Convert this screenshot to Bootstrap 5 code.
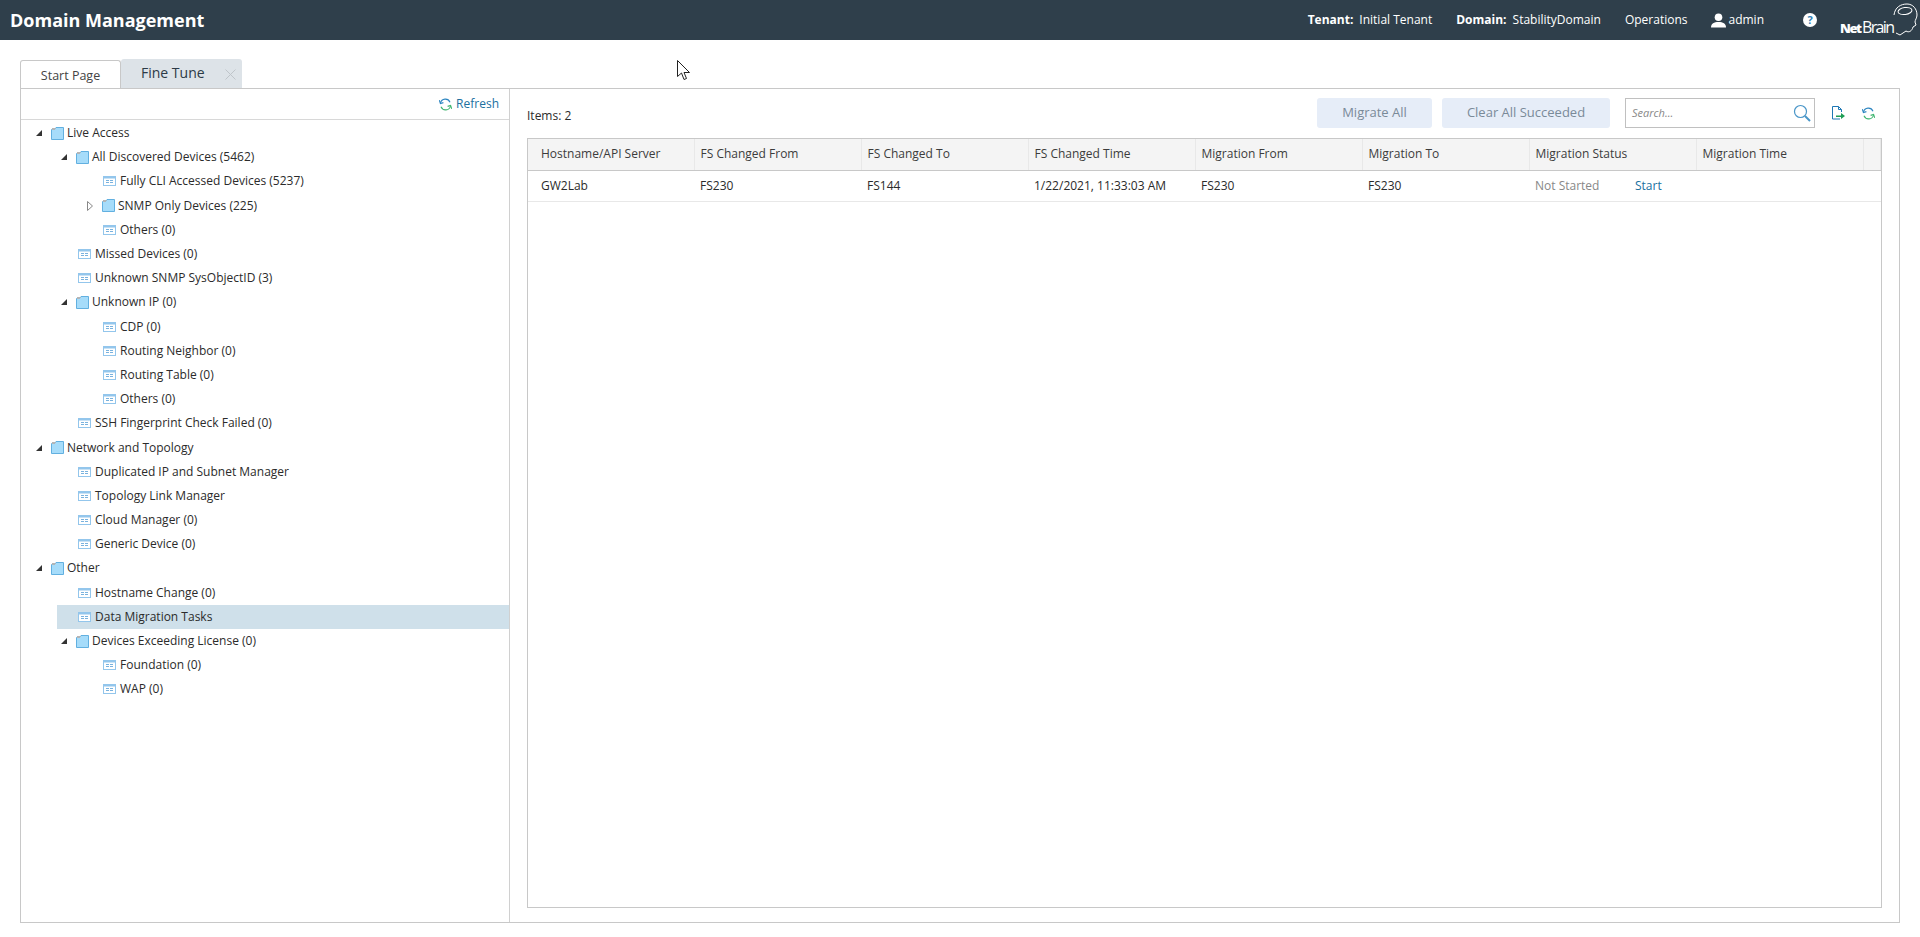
<!DOCTYPE html>
<html lang="en">
<head>
  <meta charset="UTF-8" />
  <title>Domain Management</title>
  <link href="https://cdn.jsdelivr.net/npm/bootstrap@5.3.0/dist/css/bootstrap.min.css" rel="stylesheet"/>
  <style>
    body { background: #fff; font-family: "Open Sans", "Liberation Sans", sans-serif; font-size: 12px; color: #2b2b2b; height: 937px; overflow: hidden; }
    .top-bar { height: 40px; background: #2f3f4b; color: #fff; padding: 0 2px 0 10px; }
    .top-bar h1 { font-size: 18px; font-weight: 700; margin: 0; line-height: 40px; }
    .top-item { font-size: 12px; }
    .top-item b { font-weight: 700; margin-right: 6px; }
    .page-wrap { padding: 19px 20px 0 20px; }
    .tab-row { height: 29px; align-items: flex-end; }
    .tab-start { width: 101px; height: 28px; border: 1px solid #c8c8c8; border-bottom: 0; border-radius: 3px 3px 0 0; text-align: center; line-height: 30px; color: #444; font-size: 12.5px; }
    .tab-fine { width: 121px; height: 29px; background: #dde3e8; border-radius: 3px 3px 0 0; padding-left: 20px; font-size: 14px; line-height: 28px; color: #2c3a46; }
    .tab-fine svg { margin-left: 20px; }
    .main-panel { height: 835px; border: 1px solid #c8c8c8; }
    .left-pane { width: 489px; border-right: 1px solid #d0d0d0; }
    .refresh-row { height: 31px; border-bottom: 1px solid #d8d8d8; padding-right: 10px; color: #20709f; gap: 4px; }
    .tree-list { padding-top: 1px; }
    .tree-row { height: 24.2px; white-space: nowrap; }
    .tree-row svg { flex: none; }
    .tree-row.on { background: #cfe0ea; margin-left: 36px; padding-left: 21px; }
    .tw { width: 6px; margin-right: 9px; }
    .lv0 { padding-left: 15px; }
    .lv1 { padding-left: 40px; }
    .lv2 { padding-left: 66px; }
    .leaf1 { padding-left: 57px; }
    .leaf2 { padding-left: 82px; }
    .ico-f { margin-right: 3px; }
    .ico-l { margin-right: 4px; }
    .right-pane { padding: 9px 17px 14px 17px; min-width: 0; }
    .tool-row { height: 30px; margin-bottom: 10px; }
    .btn-soft { height: 30px; background: #e6edf8; color: #7a8a99; border: 0; border-radius: 3px; font-size: 13px; padding: 0; }
    .search-box { width: 190px; height: 30px; border: 1px solid #c0c0c0; padding: 0 3px 0 6px; margin-left: 15px; font-style: italic; color: #888; font-size: 11px; }
    .data-wrap { height: 770px; border: 1px solid #c8c8c8; }
    .data-tbl { table-layout: fixed; width: 100%; margin: 0; font-size: 12px; --bs-table-color: #2b2b2b; }
    .data-tbl th { height: 31px; background: #f4f4f4; font-weight: 400; padding: 0 0 0 6px; vertical-align: middle; border-bottom: 1px solid #c8c8c8; border-right: 1px solid #e8e8e8; color: #3c3c3c; }
    .data-tbl td { height: 31px; padding: 0 0 0 6px; vertical-align: middle; border-bottom: 1px solid #e8e8e8; }
    .data-tbl th:first-child, .data-tbl td:first-child { padding-left: 13px; }
    .st-off { color: #888; width: 100px; display: inline-block; }
    .st-link { color: #20709f; text-decoration: none; }
    .mouse-ptr { position: absolute; left: 677px; top: 60px; }
  </style>
</head>
<body>
  <svg width="0" height="0" class="position-absolute">
    <symbol id="folder" viewBox="0 0 13 13">
      <path d="M.5 2.5V12.5H12.5V.5H5L3.5 2.5Z" fill="#a6dcfa" stroke="#62b0e0"/>
      <path d="M1 1H5L3.5 3H1Z" fill="#b5b5b5"/>
    </symbol>
    <symbol id="leaf" viewBox="0 0 13 10">
      <rect x=".5" y=".5" width="12" height="9" fill="#fff" stroke="#93c6ec"/>
      <rect x="1" y="1" width="11" height="1.5" fill="#93c6ec"/>
      <path d="M3 4.5H6M7 4.5H10M3 6.5H6M7 6.5H10" stroke="#79b2de"/>
    </symbol>
    <symbol id="sync" viewBox="0 0 13 13" fill="none">
      <path d="M1.5 5A5 5 0 0 1 11 4.2" stroke="#2e86c1" stroke-width="1.1"/>
      <path d="M11.5 8A5 5 0 0 1 2 8.8" stroke="#3fb56f" stroke-width="1.1"/>
      <path d="M.3 2.2L1.4 5.5L4.4 4.6" stroke="#2e86c1" stroke-width="1.1"/>
      <path d="M12.7 10.8L11.6 7.5L8.6 8.4" stroke="#3fb56f" stroke-width="1.1"/>
    </symbol>
    <symbol id="down" viewBox="0 0 6 6"><path d="M6 0V6H0Z" fill="#333"/></symbol>
  </svg>

  <div class="top-bar d-flex align-items-center">
    <h1>Domain Management</h1>
    <div class="top-item ms-auto"><b>Tenant:</b>Initial Tenant</div>
    <div class="top-item" style="margin-left:24px"><b>Domain:</b>StabilityDomain</div>
    <div class="top-item" style="margin-left:24px">Operations</div>
    <div class="top-item d-flex align-items-center" style="margin-left:24px">
      <svg width="15" height="15" viewBox="0 0 15 15" style="margin-right:2px"><circle cx="7.5" cy="4.2" r="3.8" fill="#fff"/><path d="M0 14.5C0 10.5 3 9 7.5 9S15 10.5 15 14.5Z" fill="#fff"/></svg>admin</div>
    <svg width="14" height="14" viewBox="0 0 14 14" style="margin-left:39px"><circle cx="7" cy="7" r="7" fill="#fff"/><text x="7" y="11" font-size="11" font-weight="700" text-anchor="middle" fill="#2f7fb5" font-family="Open Sans">?</text></svg>
    <svg width="80" height="36" viewBox="0 0 80 36" style="margin-left:21px" fill="none" stroke="#fff">
      <text x="2" y="31" font-size="13" font-weight="800" fill="#fff" stroke="none" font-family="Open Sans" textLength="22">Net</text>
      <text x="24" y="31" font-size="16" fill="#fff" stroke="none" font-family="Open Sans" textLength="33">Brain</text>
      <path d="M56 13C57 5 63 2 69 2S79 7 79 13C79 16 77 18 77 20L78 23L75 25C74 29 71 31 68 29L62 33L58 31" stroke-width="1"/>
      <ellipse cx="67" cy="9" rx="7" ry="3.5" stroke-width="1" transform="rotate(-8 67 9)"/>
    </svg>
  </div>

  <div class="page-wrap">
    <div class="tab-row d-flex">
      <div class="tab-start">Start Page</div>
      <div class="tab-fine">Fine Tune<svg width="11" height="11" viewBox="0 0 11 11"><path d="M.5.5L10.5 10.5M10.5.5L.5 10.5" stroke="#bfc5ca"/></svg></div>
    </div>
    <div class="main-panel d-flex">
      <div class="left-pane flex-shrink-0">
        <div class="refresh-row d-flex align-items-center justify-content-end">
          <svg width="13" height="13"><use href="#sync"/></svg>Refresh
        </div>
        <div id="tree" class="tree-list"></div>
      </div>
      <div class="right-pane flex-grow-1">
        <div class="tool-row d-flex align-items-center">
          <span style="padding-top:6px">Items: 2</span>
          <button class="btn-soft ms-auto" style="width:115px">Migrate All</button>
          <button class="btn-soft" style="width:168px;margin-left:10px">Clear All Succeeded</button>
          <div class="search-box d-flex align-items-center justify-content-between">Search...
            <svg width="18" height="18" viewBox="0 0 18 18" fill="none"><circle cx="7.5" cy="7.5" r="6" stroke="#4a96c8" stroke-width="1.2"/><path d="M12 12L17 17" stroke="#4a96c8" stroke-width="2"/></svg>
          </div>
          <svg width="13" height="14" viewBox="0 0 13 14" fill="none" style="margin-left:17px"><path d="M8 13H.5V.5H6.5L9.5 3.5V6" stroke="#1f77b4"/><path d="M6.5.5V3.5H9.5" stroke="#1f77b4"/><path d="M4 9.5H9V7L13 10L9 13V11H4Z" fill="#1e9e55"/></svg>
          <svg width="13" height="13" style="margin-left:17px;margin-right:7px"><use href="#sync"/></svg>
        </div>
        <div class="data-wrap">
          <table class="table data-tbl">
            <colgroup><col style="width:166px"><col style="width:167px"><col style="width:167px"><col style="width:167px"><col style="width:167px"><col style="width:167px"><col style="width:167px"><col style="width:167px"><col></colgroup>
            <thead><tr>
              <th>Hostname/API Server</th><th>FS Changed From</th><th>FS Changed To</th><th>FS Changed Time</th><th>Migration From</th><th>Migration To</th><th>Migration Status</th><th>Migration Time</th><th></th>
            </tr></thead>
            <tbody><tr>
              <td>GW2Lab</td><td>FS230</td><td>FS144</td><td>1/22/2021, 11:33:03 AM</td><td>FS230</td><td>FS230</td><td><span class="st-off">Not Started</span><a href="#" class="st-link">Start</a></td><td></td><td></td>
            </tr></tbody>
          </table>
        </div>
      </div>
    </div>
  </div>

  <svg class="mouse-ptr" width="14" height="21" viewBox="0 0 14 21" fill="#fff" stroke="#222"><path d="M.5.5V16.5L4.5 13L7 19.5L9.5 18.5L7 12.5H12.5Z"/></svg>

  <script>
    // tree rows: kind, text; kinds set the indent and which icons are drawn
    const rows = [
      ['f0','Live Access'],['f1','All Discovered Devices (5462)'],['l2','Fully CLI Accessed Devices (5237)'],
      ['c2','SNMP Only Devices (225)'],['l2','Others (0)'],['l1','Missed Devices (0)'],['l1','Unknown SNMP SysObjectID (3)'],
      ['f1','Unknown IP (0)'],['l2','CDP (0)'],['l2','Routing Neighbor (0)'],['l2','Routing Table (0)'],['l2','Others (0)'],
      ['l1','SSH Fingerprint Check Failed (0)'],['f0','Network and Topology'],['l1','Duplicated IP and Subnet Manager'],
      ['l1','Topology Link Manager'],['l1','Cloud Manager (0)'],['l1','Generic Device (0)'],['f0','Other'],
      ['l1','Hostname Change (0)'],['s1','Data Migration Tasks'],['f1','Devices Exceeding License (0)'],['l2','Foundation (0)'],['l2','WAP (0)']
    ];
    const folder = '<svg class="ico-f" width="13" height="13"><use href="#folder"/></svg>';
    const leaf = '<svg class="ico-l" width="13" height="10"><use href="#leaf"/></svg>';
    const down = '<svg class="tw" width="6" height="6"><use href="#down"/></svg>';
    const closed = '<svg class="tw" width="6" height="10" viewBox="0 0 6 10"><path d="M.5.5L5.5 5L.5 9.5Z" fill="#fff" stroke="#888"/></svg>';
    document.getElementById('tree').innerHTML = rows.map(([k, t]) => {
      let cls = 'leaf1', pre = leaf;
      if (k == 'f0') { cls = 'lv0'; pre = down + folder; }
      if (k == 'f1') { cls = 'lv1'; pre = down + folder; }
      if (k == 'c2') { cls = 'lv2'; pre = closed + folder; }
      if (k == 'l2') cls = 'leaf2';
      if (k == 's1') cls = 'on';
      return `<div class="tree-row d-flex align-items-center ${cls}">${pre}<span>${t}</span></div>`;
    }).join('');
  </script>
</body>
</html>
